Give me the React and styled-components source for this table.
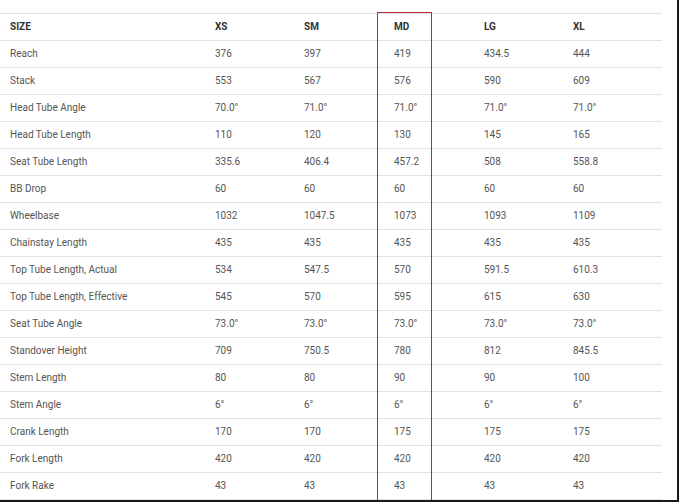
import React from "react";
import styled, { createGlobalStyle } from "styled-components";

const Global = createGlobalStyle`
  html, body { margin: 0; padding: 0; background: #fff; }
  body { font-family: Roboto, "Liberation Sans", sans-serif; }
`;

const Frame = styled.div`
  position: relative;
  width: 679px;
  height: 502px;
  box-sizing: border-box;
  padding-top: 13px;
  border-right: 2px solid #1a1a1a;
  border-bottom: 2px solid #1a1a1a;
  background: #fff;
  overflow: hidden;
`;

const Table = styled.div`
  width: 662px;
  border-top: 1px solid #e2e2e2;
`;

const Row = styled.div`
  display: grid;
  grid-template-columns: 205px 89px 90px 90px 89px 1fr;
  height: 27px;
  box-sizing: border-box;
  padding-bottom: 2px;
  border-bottom: 1px solid #e2e2e2;
  align-items: center;
`;

const Cell = styled.div`
  padding-left: 10px;
  font-size: 10px;
  font-weight: ${(p) => (p.$head ? 700 : 400)};
  color: ${(p) => (p.$head ? "#333" : "#555")};
  white-space: nowrap;
`;

const Highlight = styled.div`
  position: absolute;
  left: 377px;
  top: 12px;
  width: 55px;
  bottom: 0;
  box-sizing: border-box;
  border: 1px solid #be2a30;
  border-bottom: none;
  pointer-events: none;
`;

const header = ["SIZE", "XS", "SM", "MD", "LG", "XL"];
const rows = [
  ["Reach", "376", "397", "419", "434.5", "444"],
  ["Stack", "553", "567", "576", "590", "609"],
  ["Head Tube Angle", "70.0°", "71.0°", "71.0°", "71.0°", "71.0°"],
  ["Head Tube Length", "110", "120", "130", "145", "165"],
  ["Seat Tube Length", "335.6", "406.4", "457.2", "508", "558.8"],
  ["BB Drop", "60", "60", "60", "60", "60"],
  ["Wheelbase", "1032", "1047.5", "1073", "1093", "1109"],
  ["Chainstay Length", "435", "435", "435", "435", "435"],
  ["Top Tube Length, Actual", "534", "547.5", "570", "591.5", "610.3"],
  ["Top Tube Length, Effective", "545", "570", "595", "615", "630"],
  ["Seat Tube Angle", "73.0°", "73.0°", "73.0°", "73.0°", "73.0°"],
  ["Standover Height", "709", "750.5", "780", "812", "845.5"],
  ["Stem Length", "80", "80", "90", "90", "100"],
  ["Stem Angle", "6°", "6°", "6°", "6°", "6°"],
  ["Crank Length", "170", "170", "175", "175", "175"],
  ["Fork Length", "420", "420", "420", "420", "420"],
  ["Fork Rake", "43", "43", "43", "43", "43"],
];

export default function App() {
  return (
    <>
      <Global />
      <Frame>
        <Table>
          <Row>
            {header.map((h) => (
              <Cell key={h} $head>
                {h}
              </Cell>
            ))}
          </Row>
          {rows.map((r) => (
            <Row key={r[0]}>
              {r.map((v, i) => (
                <Cell key={i}>{v}</Cell>
              ))}
            </Row>
          ))}
        </Table>
        <Highlight />
      </Frame>
    </>
  );
}
